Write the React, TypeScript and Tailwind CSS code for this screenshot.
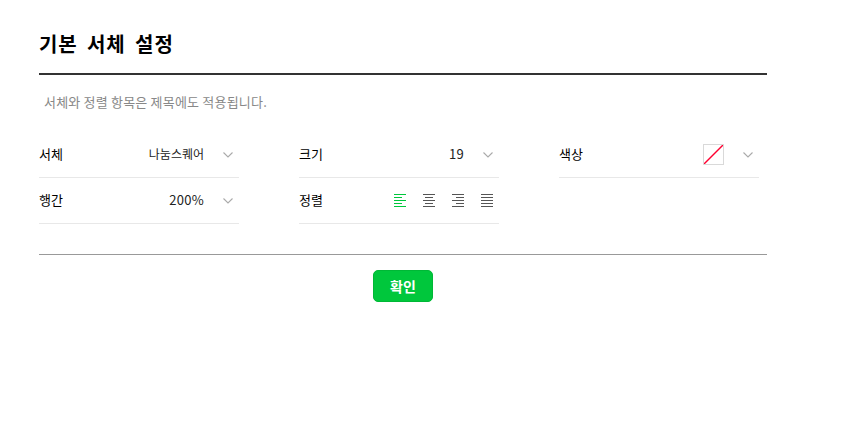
const Chevron = () => (
  <svg width="10" height="6" viewBox="0 0 10 6" fill="none" className="shrink-0">
    <path d="M0.5 0.5l4.5 4.5 4.5-4.5" stroke="#aaa" strokeWidth="1.1" />
  </svg>
);

const AlignIcon = ({ lines, color }: { lines: [number, number][]; color: string }) => (
  <svg width="12" height="13" viewBox="0 0 12 13" className="block" shapeRendering="crispEdges">
    {lines.map(([x, w], i) => (
      <rect key={i} x={x} y={i * 3} width={w} height="1" fill={color} />
    ))}
  </svg>
);

const Row = ({ label, children }: { label: string; children: React.ReactNode }) => (
  <div className="flex h-[46px] items-center justify-between border-b border-[#e8e8e8]">
    <span className="pb-[2px] text-[13px] text-black">{label}</span>
    <div className="flex items-center">{children}</div>
  </div>
);

const SelectValue = ({ value, wide }: { value: string; wide?: boolean }) => (
  <>
    <span className={wide ? "pb-[2px] text-[13px] tracking-[0.3px] text-[#222]" : "pb-[2px] text-[12px] text-[#222]"}>{value}</span>
    <span className="ml-[19px] mr-[6px] flex">
      <Chevron />
    </span>
  </>
);

export default function App() {
  return (
    <div className="min-h-[443px] bg-white pl-[39px] pt-[29px] font-['Noto_Sans_CJK_KR','Liberation_Sans',sans-serif]">
      <div className="w-[728px]">
        <h1 className="h-[46px] border-b-2 border-[#333] text-[20px] leading-[30px] font-bold tracking-[0.9px] text-black [word-spacing:4px]">
          기본 서체 설정
        </h1>
        <p className="mt-[18px] pl-[5px] text-[13px] leading-[18px] tracking-[0.2px] text-[#888]">
          서체와 정렬 항목은 제목에도 적용됩니다.
        </p>

        <div className="mt-[21px] grid w-[720px] grid-cols-[200px_200px_200px] gap-x-[60px]">
          <Row label="서체">
            <SelectValue value="나눔스퀘어" />
          </Row>
          <Row label="크기">
            <SelectValue value="19" wide />
          </Row>
          <Row label="색상">
            <span className="relative h-[21px] w-[21px] border border-[#d9d9d9] bg-white">
              <svg width="19" height="19" viewBox="0 0 19 19" className="absolute inset-0">
                <path d="M0 19L19 0" stroke="#ff0030" strokeWidth="1.4" />
              </svg>
            </span>
            <span className="ml-[19px] mr-[6px] flex">
              <Chevron />
            </span>
          </Row>
          <Row label="행간">
            <SelectValue value="200%" wide />
          </Row>
          <Row label="정렬">
            <div className="mr-[6px] flex gap-[17px]">
              <AlignIcon color="#00c73c" lines={[[0, 12], [0, 8], [0, 12], [0, 8], [0, 12]]} />
              <AlignIcon color="#555" lines={[[0, 12], [2, 8], [0, 12], [2, 8], [0, 12]]} />
              <AlignIcon color="#555" lines={[[0, 12], [4, 8], [0, 12], [4, 8], [0, 12]]} />
              <AlignIcon color="#555" lines={[[0, 12], [0, 12], [0, 12], [0, 12], [0, 12]]} />
            </div>
          </Row>
        </div>

        <div className="mt-[30px] border-t border-[#999] pt-[15px] text-center">
          <button className="h-[32px] w-[60px] rounded-[5px] border border-[#00b836] bg-[#00c73c] text-[14px] font-bold text-white">
            확인
          </button>
        </div>
      </div>
    </div>
  );
}
